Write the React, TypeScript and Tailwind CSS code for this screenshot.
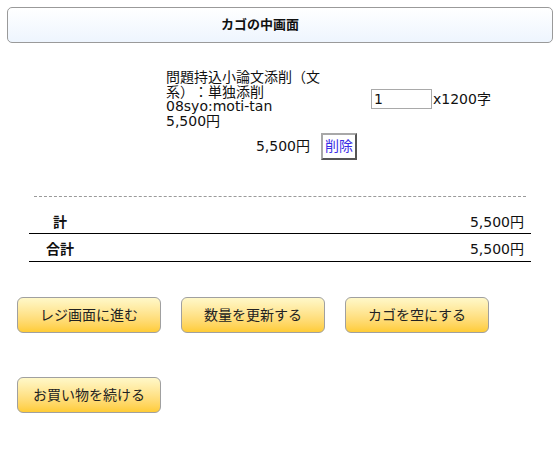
export default function App() {
  const font = { fontFamily: '"DejaVu Sans", "Noto Sans CJK JP", sans-serif' };

  const buttons = ["レジ画面に進む", "数量を更新する", "カゴを空にする"];

  return (
    <div className="w-[560px] h-[449px] bg-white text-[14px] text-[#111] [text-spacing-trim:space-all]" style={font}>
      {/* header bar */}
      <div className="pt-[7px] px-[7px]">
        <div className="h-[36px] rounded-[5px] border border-[#9a9a9a] bg-gradient-to-b from-white to-[#eef5fe] flex items-center justify-center pr-[40px]">
          <span className="text-[13px] font-bold">カゴの中画面</span>
        </div>
      </div>

      {/* cart item */}
      <div className="ml-[166px] mt-[27px] flex items-center">
        <div className="w-[162px] leading-[14.5px]">
          問題持込小論文添削（文系）：単独添削
          <br />
          08syo:moti-tan
          <br />
          5,500円
        </div>
        <div className="ml-[43px] flex items-center">
          <input
            defaultValue="1"
            className="w-[61px] h-[20px] border border-[#a9a9a9] px-[2px] text-[14px] outline-none"
            style={font}
          />
          <span className="ml-[1px]">x1200字</span>
        </div>
      </div>
      <div className="ml-[166px] mt-[5px] flex items-center">
        <div className="w-[144px] text-right">5,500円</div>
        <button
          className="ml-[11px] w-[36px] h-[27px] bg-white border-2 border-t-[#a8a8a8] border-l-[#a8a8a8] border-r-[#555] border-b-[#555] text-[#3b2ee6] text-[14px] flex items-center justify-center"
          style={font}
        >
          削除
        </button>
      </div>

      {/* dashed divider */}
      <div className="ml-[34px] mt-[36px] w-[492px] border-t border-dashed border-[#9a9a9a]" />

      {/* totals */}
      <div className="ml-[29px] w-[502px] mt-[14px]">
        <div className="h-[23px] flex items-center border-b border-black">
          <div className="w-[62px] text-center font-bold">計</div>
          <div className="flex-1 text-right pr-[7px]">5,500円</div>
        </div>
        <div className="h-[28px] pt-[3px] flex items-center border-b border-black">
          <div className="w-[62px] text-center font-bold">合計</div>
          <div className="flex-1 text-right pr-[7px]">5,500円</div>
        </div>
      </div>

      {/* action buttons */}
      <div className="ml-[17px] mt-[35px] flex gap-[20px]">
        {buttons.map((label) => (
          <YellowButton key={label} label={label} />
        ))}
      </div>
      <div className="ml-[17px] mt-[44px] flex">
        <YellowButton label="お買い物を続ける" />
      </div>
    </div>
  );
}

function YellowButton({ label }: { label: string }) {
  return (
    <button
      className="w-[144px] h-[36px] rounded-[6px] border border-[#a0a0a0] bg-gradient-to-b from-[#fff8c8] to-[#ffcc33] text-[14px] text-[#222] flex items-center justify-center"
      style={{ fontFamily: '"DejaVu Sans", "Noto Sans CJK JP", sans-serif' }}
    >
      {label}
    </button>
  );
}
